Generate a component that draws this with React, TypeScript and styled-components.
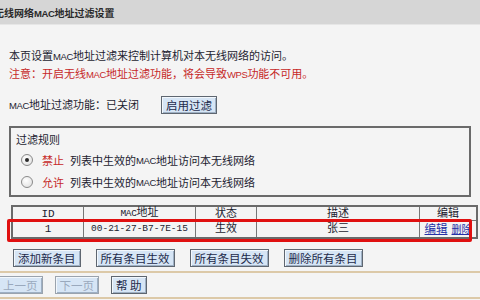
import React from "react";
import styled, { createGlobalStyle } from "styled-components";

const Global = createGlobalStyle`
  html, body { margin: 0; padding: 0; }
  body {
    width: 480px; height: 300px; overflow: hidden;
    background: #f4f4f4;
    font-family: "Liberation Sans", "Noto Sans CJK SC", sans-serif;
    font-size: 11px; color: #1c1c30;
  }
`;

const Page = styled.div`
  width: 480px; height: 300px; overflow: hidden;
  display: flex; flex-direction: column;
`;

const TitleBar = styled.div`
  height: 24px; flex: none; background: #d6d6d6; border-bottom: 1px solid #e6e6e6;
  display: flex; align-items: center;
`;

const Title = styled.span`
  margin-left: -6px; font-size: 10px; font-weight: bold; color: #2a2a2a; white-space: nowrap;
`;

const Lat = styled.span`
  font-size: 9.5px; letter-spacing: -0.4px;
`;

const Body = styled.div`
  padding: 0 9px; display: flex; flex-direction: column;
`;

const Line = styled.div<{ $red?: boolean }>`
  height: 18px; line-height: 18px; white-space: nowrap;
  color: ${(p) => (p.$red ? "#c62828" : "#1c1c30")};
`;

const Intro = styled.div`
  margin-top: 22px; display: flex; flex-direction: column;
`;

const StatusRow = styled.div`
  margin-top: 13px; display: flex; align-items: center; gap: 22px; height: 18px;
`;

const Btn = styled.button<{ $off?: boolean }>`
  height: 18px; padding: 0 4px; margin: 0;
  font-family: "Noto Sans CJK SC", sans-serif; font-size: 11.5px; line-height: 14px;
  background: #d6e5f5; color: ${(p) => (p.$off ? "#9aa9bd" : "#1d2a4a")};
  border: 1px solid ${(p) => (p.$off ? "#9aa3ad" : "#5e6670")};
  box-shadow: inset 1px 1px 0 #f2f7fc, inset -1px -1px 0 #9eb0c4;
  white-space: nowrap;
`;

const Rules = styled.div`
  margin-top: 12px; height: 64px; border: 2px solid #6a6a6a;
  padding: 3px 6px 0 5px; display: flex; flex-direction: column;
`;

const RuleTitle = styled.div`
  height: 18px; line-height: 18px; color: #1c1c30;
`;

const RuleRow = styled.div`
  height: 22px; display: flex; align-items: center; white-space: nowrap;
`;

const Radio = styled.span<{ $on?: boolean }>`
  width: 10px; height: 10px; border-radius: 50%; margin-left: 5px; margin-right: 9px;
  border: 1px solid #8a8a8a; background: radial-gradient(circle at 40% 35%, #ffffff, #dcdcdc);
  display: flex; align-items: center; justify-content: center;
  &::after {
    content: ""; width: 4px; height: 4px; border-radius: 50%;
    background: ${(p) => (p.$on ? "#2a2a2a" : "transparent")};
  }
`;

const Keyword = styled.span`
  color: #c62828; margin-right: 6px;
`;

const TableWrap = styled.div`
  position: relative; margin: 8px 0 0 2px; width: 459px;
`;

const Table = styled.table`
  width: 459px; table-layout: fixed; border-collapse: collapse; border: 2px solid #6a6a6a;
  font-family: "Liberation Mono", "Noto Sans CJK SC", monospace; font-size: 11px;
`;

const Th = styled.th<{ $w: number }>`
  width: ${(p) => p.$w}px; height: 13px; padding: 0; font-weight: normal;
  border: 1px solid #777; color: #1c1c30; line-height: 12px; white-space: nowrap;
`;

const Td = styled.td<{ $mono?: boolean }>`
  height: 16px; padding: 0; text-align: center; border: 1px solid #777; color: #1c1c30;
  line-height: 12px; white-space: nowrap; overflow: hidden;
  font-size: ${(p) => (p.$mono ? "9.5px" : "11px")};
`;

const LinkA = styled.a<{ $small?: boolean }>`
  color: #2531a6; text-decoration: underline; font-family: "Noto Sans CJK SC", sans-serif;
  font-size: ${(p) => (p.$small ? "10px" : "11.5px")}; margin: 0 2px;
`;

const Highlight = styled.div`
  position: absolute; left: -4px; top: 14px; width: 459px; height: 17px;
  border: 3px solid #e01010; border-radius: 2px; pointer-events: none;
`;

const ButtonRow = styled.div`
  margin: 10px 0 0 4px; display: flex; gap: 15px;
`;

const Rule = styled.div`
  height: 2px; background: #dcc9a8;
`;

const Footer = styled.div`
  margin-top: 4px; display: flex; flex-direction: column;
`;

const FooterButtons = styled.div`
  display: flex; gap: 12px; margin: 3px 0 3px -2px;
`;

export default function App() {
  return (
    <Page>
      <Global />
      <TitleBar>
        <Title>无线网络<Lat>MAC</Lat>地址过滤设置</Title>
      </TitleBar>
      <Body>
        <Intro>
          <Line>本页设置<Lat>MAC</Lat>地址过滤来控制计算机对本无线网络的访问。</Line>
          <Line $red>注意：开启无线<Lat>MAC</Lat>地址过滤功能，将会导致<Lat>WPS</Lat>功能不可用。</Line>
        </Intro>
        <StatusRow>
          <Line><Lat>MAC</Lat>地址过滤功能：已关闭</Line>
          <Btn>启用过滤</Btn>
        </StatusRow>
        <Rules>
          <RuleTitle>过滤规则</RuleTitle>
          <RuleRow>
            <Radio $on />
            <Keyword>禁止</Keyword>列表中生效的<Lat>MAC</Lat>地址访问本无线网络
          </RuleRow>
          <RuleRow>
            <Radio />
            <Keyword>允许</Keyword>列表中生效的<Lat>MAC</Lat>地址访问本无线网络
          </RuleRow>
        </Rules>
        <TableWrap>
          <Table>
            <thead>
              <tr>
                <Th $w={70}>ID</Th>
                <Th $w={111}><Lat>MAC</Lat>地址</Th>
                <Th $w={60}>状态</Th>
                <Th $w={162}>描述</Th>
                <Th $w={56}>编辑</Th>
              </tr>
            </thead>
            <tbody>
              <tr>
                <Td>1</Td>
                <Td $mono>00-21-27-B7-7E-15</Td>
                <Td>生效</Td>
                <Td>张三</Td>
                <Td>
                  <LinkA>编辑</LinkA>
                  <LinkA $small>删除</LinkA>
                </Td>
              </tr>
            </tbody>
          </Table>
          <Highlight />
        </TableWrap>
        <ButtonRow>
          <Btn>添加新条目</Btn>
          <Btn>所有条目生效</Btn>
          <Btn>所有条目失效</Btn>
          <Btn>删除所有条目</Btn>
        </ButtonRow>
      </Body>
      <Footer>
        <Rule />
        <FooterButtons>
          <Btn $off>上一页</Btn>
          <Btn $off>下一页</Btn>
          <Btn>帮 助</Btn>
        </FooterButtons>
        <Rule />
      </Footer>
    </Page>
  );
}
